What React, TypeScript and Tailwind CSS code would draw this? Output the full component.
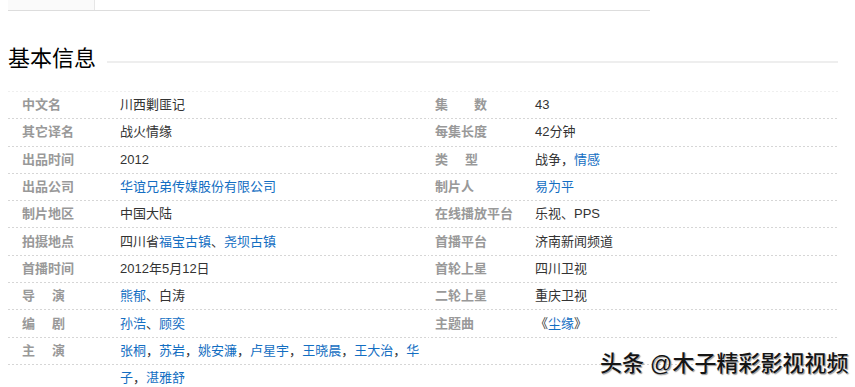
import React from "react";

type Seg = [string, boolean?];
type Row = { label: string; spaced?: number; value: Seg[] };

const FONT = { fontFamily: '"Liberation Sans", "Noto Sans CJK SC", sans-serif' } as const;

const leftRows: Row[] = [
  { label: "中文名", value: [["川西剿匪记"]] },
  { label: "其它译名", value: [["战火情缘"]] },
  { label: "出品时间", value: [["2012"]] },
  { label: "出品公司", value: [["华谊兄弟传媒股份有限公司", true]] },
  { label: "制片地区", value: [["中国大陆"]] },
  { label: "拍摄地点", value: [["四川省"], ["福宝古镇", true], ["、"], ["尧坝古镇", true]] },
  { label: "首播时间", value: [["2012年5月12日"]] },
  { label: "导演", spaced: 17, value: [["熊郁", true], ["、白涛"]] },
  { label: "编剧", spaced: 17, value: [["孙浩", true], ["、"], ["顾奕", true]] },
  {
    label: "主演",
    spaced: 17,
    value: [
      ["张桐", true], ["，"], ["苏岩", true], ["，"], ["姚安濂", true], ["，"],
      ["卢星宇", true], ["，"], ["王晓晨", true], ["，"], ["王大治", true], ["，"], ["华", true],
    ],
  },
  { label: "", value: [["子", true], ["，"], ["湛雅舒", true]] },
];

const rightRows: Row[] = [
  { label: "集数", spaced: 26, value: [["43"]] },
  { label: "每集长度", value: [["42分钟"]] },
  { label: "类型", spaced: 17, value: [["战争，"], ["情感", true]] },
  { label: "制片人", value: [["易为平", true]] },
  { label: "在线播放平台", value: [["乐视、PPS"]] },
  { label: "首播平台", value: [["济南新闻频道"]] },
  { label: "首轮上星", value: [["四川卫视"]] },
  { label: "二轮上星", value: [["重庆卫视"]] },
  { label: "主题曲", value: [["《"], ["尘缘", true], ["》"]] },
  { label: "", value: [] },
];

function Label({ row }: { row: Row }) {
  if (row.spaced && row.label.length === 2) {
    return (
      <span className="flex">
        <span>{row.label[0]}</span>
        <span style={{ marginLeft: row.spaced }}>{row.label[1]}</span>
      </span>
    );
  }
  return <span>{row.label}</span>;
}

function Column({ rows, side }: { rows: Row[]; side: "l" | "r" }) {
  return (
    <div className={side === "l" ? "w-[420px]" : "w-[410px]"}>
      <div className="h-px bg-[linear-gradient(to_right,#efefef_50%,transparent_50%)] bg-[length:4px_1px] bg-repeat-x" />
      {rows.map((row, i) => (
        <div
          key={i}
          className="flex h-[27.3px] items-center bg-[linear-gradient(to_right,#d6d6d6_50%,transparent_50%)] bg-[length:4px_1px] bg-bottom bg-repeat-x pb-px text-[13px] leading-[26px]"
        >
          <div
            className={
              side === "l"
                ? "w-[112px] shrink-0 pl-[14px] font-bold text-[#999999]"
                : "w-[107px] shrink-0 pl-[7px] font-bold text-[#999999]"
            }
          >
            <Label row={row} />
          </div>
          <div className="whitespace-nowrap text-[#333333]">
            {row.value.map(([t, link], j) => (
              <span key={j} className={link ? "text-[#136ec2]" : ""}>
                {t}
              </span>
            ))}
          </div>
        </div>
      ))}
    </div>
  );
}

export default function App() {
  return (
    <div className="relative h-[387px] w-[855px] overflow-hidden bg-white" style={FONT}>
      <div className="ml-[8px] w-[830px]">
        <div className="flex h-[11px] w-[642px] border-b border-[#dddddd]">
          <div className="w-[87px] border-r border-[#e6e6e6] bg-[#fafafa]" />
        </div>
        <div className="mt-[37px] flex h-[22px] items-start">
          <h2 className="text-[22px] leading-[22px] font-normal text-black">基本信息</h2>
          <div className="ml-[11px] mt-[13px] h-[2px] flex-1 bg-[#eeeeee]" />
        </div>
        <div className="mt-[21px] flex">
          <Column rows={leftRows} side="l" />
          <Column rows={rightRows} side="r" />
        </div>
      </div>
      <div className="absolute left-[600px] top-[351px] whitespace-nowrap text-[22px] leading-[26px] font-medium text-[#151515] [text-shadow:0_0_2px_#ffffff,1px_1px_1px_rgba(0,0,0,0.5)]">
        头条 @木子精彩影视视频
      </div>
    </div>
  );
}
